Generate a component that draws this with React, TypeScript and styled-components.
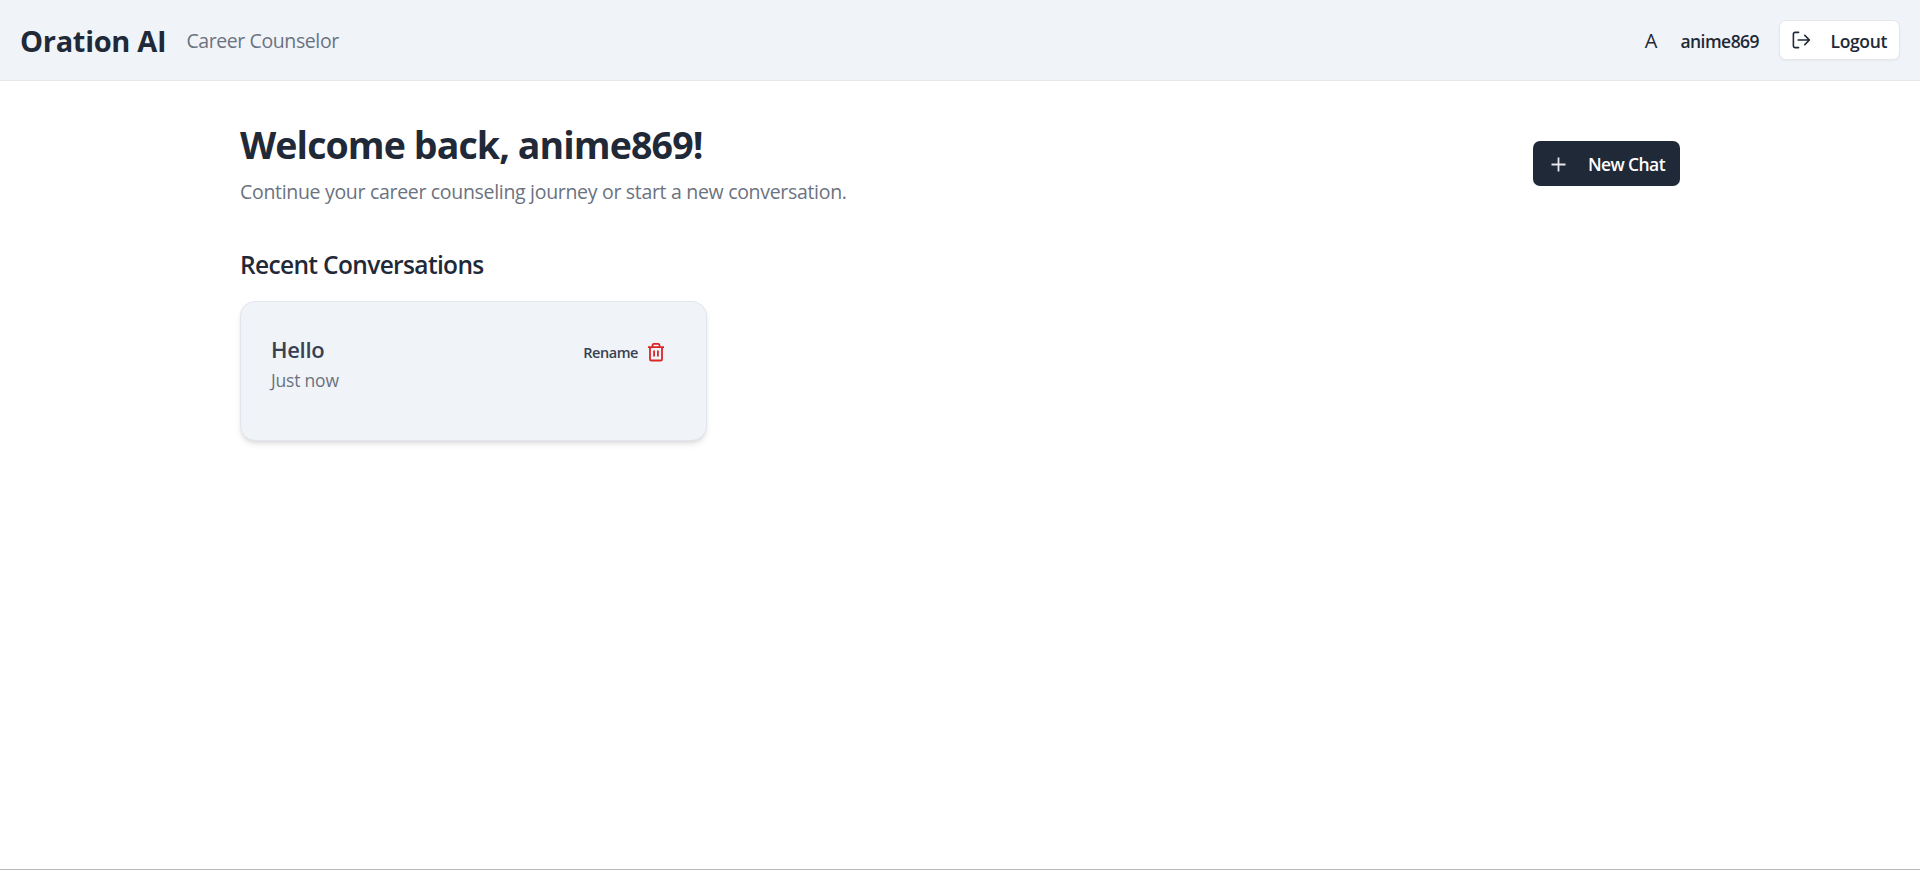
import React from "react";
import styled, { createGlobalStyle } from "styled-components";

const GlobalStyle = createGlobalStyle`
  * { box-sizing: border-box; }
  body { margin: 0; background: #fff; color: #1f2937; font-family: "Open Sans", "Noto Sans", sans-serif; }
  h1, h2, h3, p { margin: 0; }
  button { font-family: inherit; color: inherit; white-space: nowrap; }
  svg { display: block; flex: none; }
`;

const Page = styled.div`
  height: 870px;
  display: flex;
  flex-direction: column;
  border-bottom: 1px solid #b9b8bd;
`;
const Header = styled.header`
  height: 81px;
  padding: 2px 20px 0;
  display: flex;
  align-items: center;
  justify-content: space-between;
  background: #f0f4f9;
  border-bottom: 1px solid #e5e7eb;
`;
const Group = styled.div`
  display: flex;
  align-items: center;
  gap: 20px;
`;
const Brand = styled.h1`
  font-size: 29px;
  line-height: 40px;
  font-weight: 700;
  letter-spacing: -0.3px;
`;
const Muted = styled.p<{ $tracking: number }>`
  font-size: 19.5px;
  line-height: 30px;
  letter-spacing: ${(p) => p.$tracking}px;
  color: #6b7280;
`;
const Account = styled(Group)`
  gap: 0;
`;
const Avatar = styled.span`
  font-size: 20px;
  line-height: 30px;
  margin-right: 23px;
`;
const UserName = styled.span`
  font-size: 17.5px;
  line-height: 25px;
  font-weight: 600;
  letter-spacing: -0.55px;
  margin-right: 20px;
`;
const LogoutButton = styled.button`
  width: 121px;
  height: 40px;
  margin-bottom: 2px;
  display: flex;
  align-items: center;
  justify-content: space-between;
  padding: 2px 12px 0 11px;
  border: 1px solid #e5e7eb;
  border-radius: 7px;
  background: #fff;
  box-shadow: 0 1px 2px rgba(0, 0, 0, 0.05);
  font-size: 17.5px;
  font-weight: 600;
  letter-spacing: -0.35px;

  svg { margin-bottom: 2px; }
`;
const Main = styled.main`
  width: 1440px;
  margin: 0 auto;
  padding-top: 40px;
`;
const Intro = styled.section`
  display: flex;
  align-items: center;
  justify-content: space-between;
  height: 85px;
`;
const Greeting = styled.div`
  padding-top: 2px;
`;
const Welcome = styled.h2`
  font-size: 37.5px;
  line-height: 45px;
  font-weight: 700;
  letter-spacing: -0.9px;
  margin-bottom: 10px;
`;
const NewChat = styled.button`
  width: 147px;
  height: 45px;
  display: flex;
  align-items: center;
  justify-content: space-between;
  padding: 0 15px;
  border: 0;
  border-radius: 7px;
  background: #1f2937;
  color: #fff;
  font-size: 17.5px;
  font-weight: 600;
  letter-spacing: -0.6px;
`;
const SectionTitle = styled.h2`
  margin-top: 41px;
  font-size: 24.5px;
  line-height: 35px;
  font-weight: 600;
  letter-spacing: -0.65px;
`;
const Card = styled.article`
  width: 467px;
  height: 140px;
  margin-top: 19px;
  padding: 32px 41px 0 30px;
  display: flex;
  align-items: flex-start;
  justify-content: space-between;
  border: 1px solid #e2e5eb;
  border-radius: 15px;
  background: #f0f4f9;
  box-shadow: 0 4px 6px -1px rgba(0, 0, 0, 0.1), 0 2px 4px -2px rgba(0, 0, 0, 0.1);
`;
const ChatTitle = styled.h3`
  font-size: 22px;
  line-height: 31px;
  font-weight: 600;
  letter-spacing: -0.3px;
  color: #374151;
`;
const ChatTime = styled.p`
  font-size: 17.5px;
  line-height: 30px;
  letter-spacing: -0.2px;
  color: #6b7280;
`;
const Actions = styled(Group)`
  gap: 9px;
  height: 36px;
`;
const Rename = styled.span`
  font-size: 14.5px;
  font-weight: 600;
  letter-spacing: -0.45px;
  color: #374151;
`;

const ExitIcon = () => (
  <svg width="20" height="20" viewBox="0 0 20 20" fill="none" stroke="currentColor" strokeWidth="1.6" strokeLinecap="round" strokeLinejoin="round">
    <path d="M7.6 2.4H4a1.6 1.6 0 0 0-1.6 1.6v12A1.6 1.6 0 0 0 4 17.6h3.6M7.2 10h11M13.8 5.4l4.6 4.6-4.6 4.6" />
  </svg>
);
const PlusIcon = () => (
  <svg width="20" height="20" viewBox="0 0 20 20" fill="none" stroke="#e5e7eb" strokeWidth="1.8">
    <path d="M10.5 3.5v14M3.5 10.5h14" />
  </svg>
);
const TrashIcon = () => (
  <svg width="18" height="20" viewBox="0 0 18 20" fill="none" stroke="#dc2626" strokeWidth="1.8" strokeLinejoin="round">
    <path d="M1 5.2h16M5.5 5V3.4c0-.9.5-1.5 1.4-1.5h4.2c.9 0 1.4.6 1.4 1.5V5M3 5.4v11.8c0 .8.5 1.3 1.3 1.3h9.4c.8 0 1.3-.5 1.3-1.3V5.4M7.1 8.6v6M10.9 8.6v6" />
  </svg>
);

export default function App() {
  return (
    <>
      <GlobalStyle />
      <Page>
        <Header>
          <Group>
            <Brand>Oration AI</Brand>
            <Muted $tracking={-0.4}>Career Counselor</Muted>
          </Group>
          <Account>
            <Avatar>A</Avatar>
            <UserName>anime869</UserName>
            <LogoutButton><ExitIcon />Logout</LogoutButton>
          </Account>
        </Header>
        <Main>
          <Intro>
            <Greeting>
              <Welcome>Welcome back, anime869!</Welcome>
              <Muted $tracking={-0.31}>Continue your career counseling journey or start a new conversation.</Muted>
            </Greeting>
            <NewChat><PlusIcon />New Chat</NewChat>
          </Intro>
          <SectionTitle>Recent Conversations</SectionTitle>
          <Card>
            <div>
              <ChatTitle>Hello</ChatTitle>
              <ChatTime>Just now</ChatTime>
            </div>
            <Actions>
              <Rename>Rename</Rename>
              <TrashIcon />
            </Actions>
          </Card>
        </Main>
      </Page>
    </>
  );
}
